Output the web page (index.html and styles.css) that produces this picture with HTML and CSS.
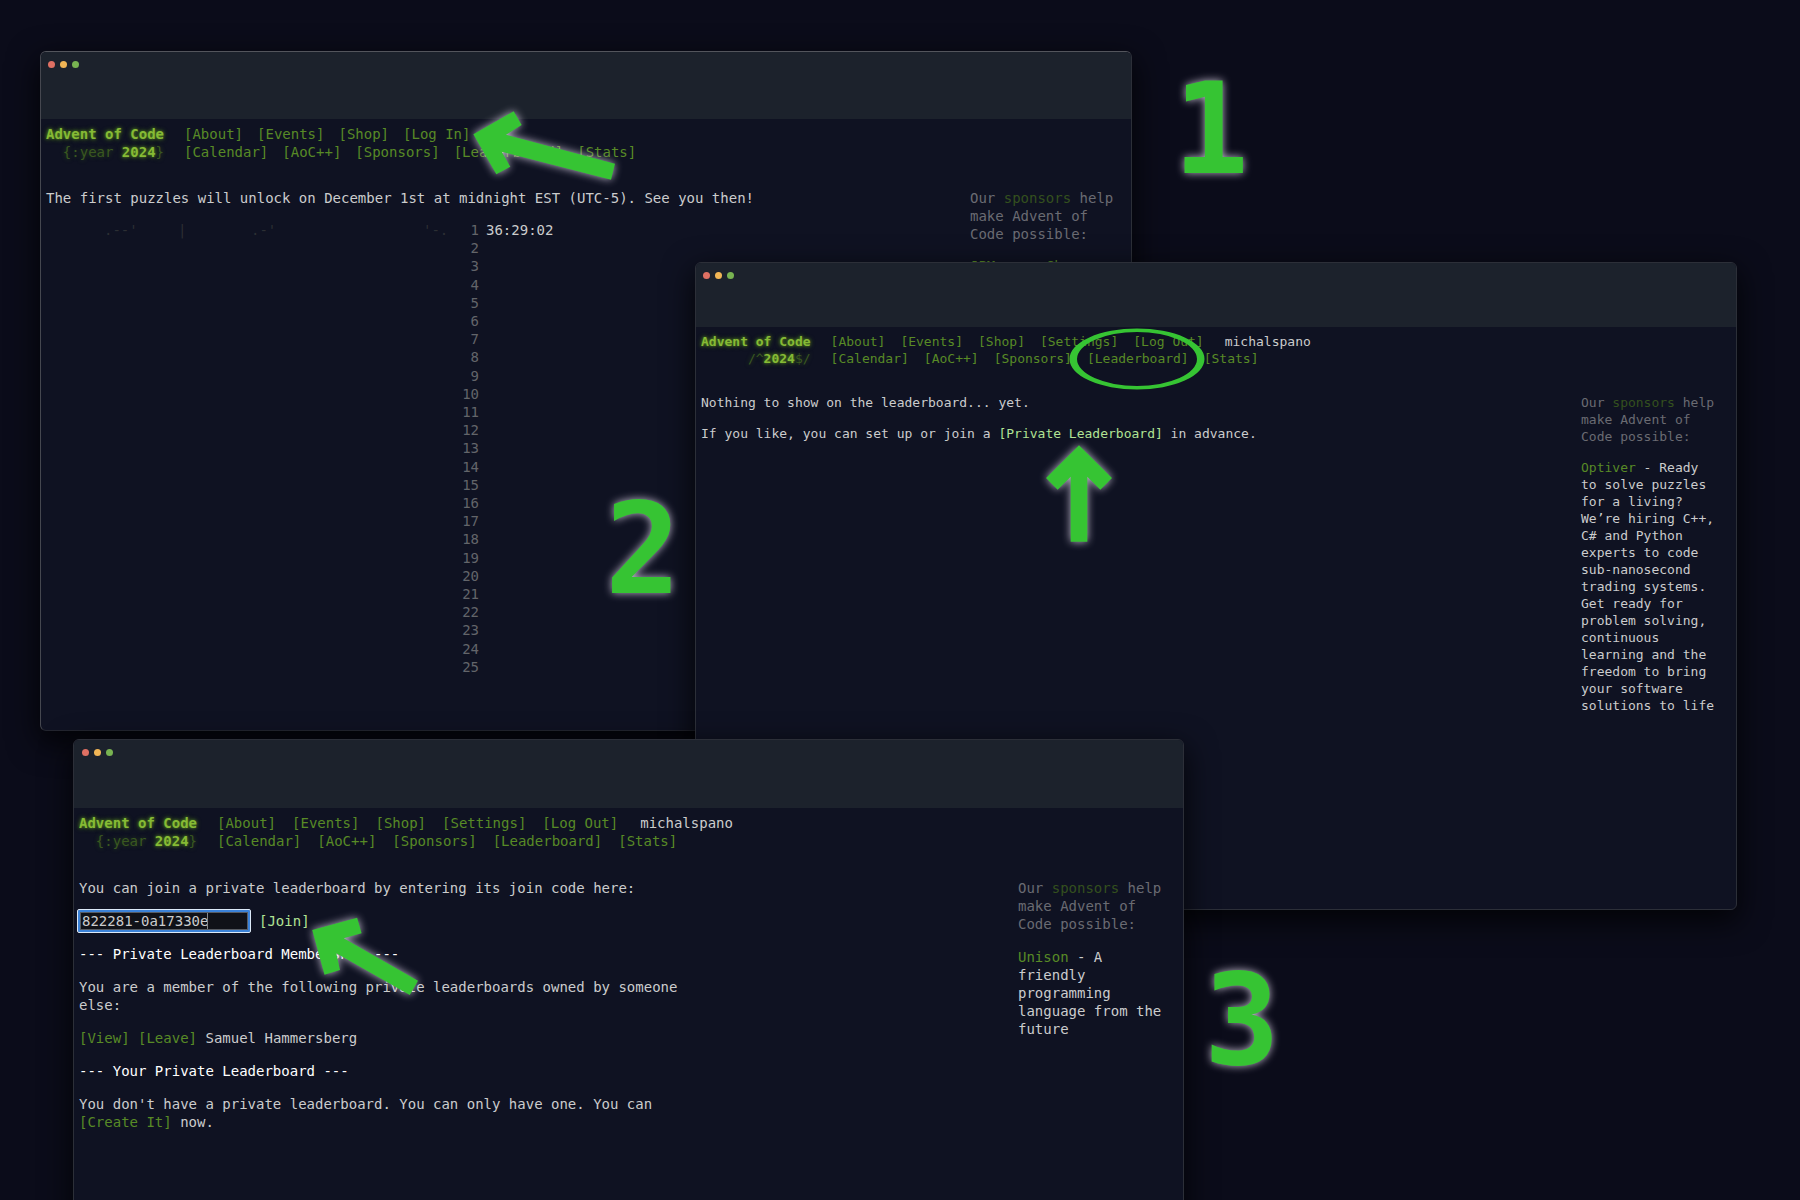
FILE: index.html
```html
<!DOCTYPE html>
<html lang="en">
<head>
<meta charset="utf-8">
<title>Joining a private leaderboard</title>
<link rel="stylesheet" href="styles.css">
</head>
<body>
<main class="desktop">

  <section class="window window-login">
    <div class="titlebar"><span class="dot red"></span><span class="dot yellow"></span><span class="dot green"></span></div>
    <div class="page">
      <header class="masthead">
        <div class="logo"><strong>Advent of Code</strong><span><i>{:year </i><strong>2024</strong><i>}</i></span></div>
        <nav>
          <div class="links"><a href="#">[About]</a><a href="#">[Events]</a><a href="#">[Shop]</a><a href="#">[Log In]</a></div>
          <div class="links"><a href="#">[Calendar]</a><a href="#">[AoC++]</a><a href="#">[Sponsors]</a><a href="#">[Leaderboard]</a><a href="#">[Stats]</a></div>
        </nav>
      </header>
      <div class="content">
        <article>
          <p>The first puzzles will unlock on December 1st at midnight EST (UTC-5). See you then!</p>
          <ol class="calendar">
            <li><span class="art"><span>.--'</span><span>|</span><span>.-'</span><span>'-.</span></span><span class="day">1</span><time>36:29:02</time></li>
            <li><span class="day">2</span></li>
            <li><span class="day">3</span></li>
            <li><span class="day">4</span></li>
            <li><span class="day">5</span></li>
            <li><span class="day">6</span></li>
            <li><span class="day">7</span></li>
            <li><span class="day">8</span></li>
            <li><span class="day">9</span></li>
            <li><span class="day">10</span></li>
            <li><span class="day">11</span></li>
            <li><span class="day">12</span></li>
            <li><span class="day">13</span></li>
            <li><span class="day">14</span></li>
            <li><span class="day">15</span></li>
            <li><span class="day">16</span></li>
            <li><span class="day">17</span></li>
            <li><span class="day">18</span></li>
            <li><span class="day">19</span></li>
            <li><span class="day">20</span></li>
            <li><span class="day">21</span></li>
            <li><span class="day">22</span></li>
            <li><span class="day">23</span></li>
            <li><span class="day">24</span></li>
            <li><span class="day">25</span></li>
          </ol>
        </article>
        <aside>
          <p class="intro">Our <a href="#">sponsors</a> help<br>make Advent of<br>Code possible:</p>
          <p><a href="#">JPMorgan Ch</a></p>
        </aside>
      </div>
    </div>
  </section>

  <section class="window window-board">
    <div class="titlebar"><span class="dot red"></span><span class="dot yellow"></span><span class="dot green"></span></div>
    <div class="page">
      <header class="masthead">
        <div class="logo"><strong>Advent of Code</strong><span><i>/^</i><strong>2024</strong><i>$/</i></span></div>
        <nav>
          <div class="links"><a href="#">[About]</a><a href="#">[Events]</a><a href="#">[Shop]</a><a href="#">[Settings]</a><a href="#">[Log Out]</a><span class="user">michalspano</span></div>
          <div class="links"><a href="#">[Calendar]</a><a href="#">[AoC++]</a><a href="#">[Sponsors]</a><a href="#">[Leaderboard]</a><a href="#">[Stats]</a></div>
        </nav>
      </header>
      <div class="content">
        <article>
          <p>Nothing to show on the leaderboard... yet.</p>
          <p>If you like, you can set up or join a <a class="lit" href="#">[Private Leaderboard]</a> in advance.</p>
        </article>
        <aside>
          <p class="intro">Our <a href="#">sponsors</a> help<br>make Advent of<br>Code possible:</p>
          <p><a href="#">Optiver</a> - Ready<br>to solve puzzles<br>for a living?<br>We’re hiring C++,<br>C# and Python<br>experts to code<br>sub-nanosecond<br>trading systems.<br>Get ready for<br>problem solving,<br>continuous<br>learning and the<br>freedom to bring<br>your software<br>solutions to life</p>
        </aside>
      </div>
    </div>
  </section>

  <section class="window window-join">
    <div class="titlebar"><span class="dot red"></span><span class="dot yellow"></span><span class="dot green"></span></div>
    <div class="page">
      <header class="masthead">
        <div class="logo"><strong>Advent of Code</strong><span><i>{:year </i><strong>2024</strong><i>}</i></span></div>
        <nav>
          <div class="links"><a href="#">[About]</a><a href="#">[Events]</a><a href="#">[Shop]</a><a href="#">[Settings]</a><a href="#">[Log Out]</a><span class="user">michalspano</span></div>
          <div class="links"><a href="#">[Calendar]</a><a href="#">[AoC++]</a><a href="#">[Sponsors]</a><a href="#">[Leaderboard]</a><a href="#">[Stats]</a></div>
        </nav>
      </header>
      <div class="content">
        <article>
          <p><label for="code">You can join a private leaderboard by entering its join code here:</label></p>
          <form class="join">
            <span class="field"><input id="code" type="text" value="822281-0a17330e"></span>
            <button type="button">[Join]</button>
          </form>
          <h2>--- Private Leaderboard Membership ---</h2>
          <p>You are a member of the following private leaderboards owned by someone<br>else:</p>
          <p><a href="#">[View]</a> <a href="#">[Leave]</a> Samuel Hammersberg</p>
          <h2>--- Your Private Leaderboard ---</h2>
          <p>You don't have a private leaderboard. You can only have one. You can<br><a href="#">[Create It]</a> now.</p>
        </article>
        <aside>
          <p class="intro">Our <a href="#">sponsors</a> help<br>make Advent of<br>Code possible:</p>
          <p><a href="#">Unison</a> - A<br>friendly<br>programming<br>language from the<br>future</p>
        </aside>
      </div>
    </div>
  </section>

  <span class="step step-1">1</span>
  <span class="step step-2">2</span>
  <span class="step step-3">3</span>

  <svg class="mark arrow-login" width="143" height="70" viewBox="0 0 429 210" aria-hidden="true"><path d="M1 70 122 1 146 42 99 71 426 158 414 206 86 122 112 167 70 190Z"/></svg>
  <svg class="mark arrow-board" width="66" height="97" viewBox="0 0 198 291" aria-hidden="true"><path d="M99 1 198 99 163 134 124 95V290H74V95L35 134 0 99Z"/></svg>
  <svg class="mark arrow-join" width="107" height="78" viewBox="0 0 107 78" aria-hidden="true"><path d="M.2 13 45.1.7 49.6 16.3 31.7 21.3 106 63.7 97.8 78 24.3 36.3 28 53 12.5 57.7Z"/></svg>
  <svg class="ring" width="136" height="62" viewBox="0 0 136 62" aria-hidden="true"><path fill-rule="evenodd" d="M.5 31a67.5 30.5 0 1 0 135 0a67.5 30.5 0 1 0-135 0ZM8 31a60 27 0 1 1 120 0a60 27 0 1 1-120 0Z"/></svg>
</main>
</body>
</html>
```
FILE: styles.css
```css
:root {
  --accent: #36c433;
  --link: #588a26;
  --text: #cbcccd;
}

* {
  box-sizing: border-box;
}

body {
  margin: 0;
  background: #0b0c1a;
  color: var(--text);
  font-family: "DejaVu Sans Mono", "Liberation Mono", monospace;
}

a {
  color: var(--link);
  text-decoration: none;
}

p,
h2,
ol {
  margin: 0;
}

.desktop {
  position: relative;
  height: 100vh;
  overflow: hidden;
}

/* Windows */

.window {
  position: absolute;
  overflow: hidden;
  border: 1px solid #2c2f38;
  border-radius: 6px;
  background: #0f1222;
  box-shadow: 0 10px 30px 2px rgba(0, 0, 0, 0.75);
  font-size: 14px;
  line-height: 18px;
}

.window-login {
  top: 51px;
  left: 40px;
  right: 668px;
  min-height: 680px;
  border-color: #53555c #2c2f38 #23252f #45474f;
}

.window-board {
  top: 262px;
  left: 695px;
  right: 63px;
  min-height: 648px;
  font-size: 13px;
  line-height: 17px;
}

.window-join {
  top: 739px;
  left: 73px;
  right: 616px;
  min-height: 500px;
}

.titlebar {
  display: flex;
  gap: 5px;
  height: 67px;
  padding: 9px 7px;
  background: #1c222c;
}

.window-board .titlebar {
  height: 64px;
}

.window-join .titlebar {
  height: 68px;
  padding-left: 8px;
}

.dot {
  width: 7px;
  height: 7px;
  border-radius: 50%;
}

.red { background: #df7063; }
.yellow { background: #f0b555; }
.green { background: #78b351; }

.page {
  padding: 6px 5px;
}

/* Masthead */

.masthead {
  display: flex;
  gap: 20px;
}

.logo {
  display: flex;
  flex-direction: column;
  align-items: flex-end;
  color: #86ba35;
  text-shadow: 0 0 3px #4d7a1e, 0 0 5px #4d7a1e;
}

.logo i {
  color: #3a5820;
  font-style: normal;
  text-shadow: 0 0 4px #2c461b;
  white-space: pre;
}

.links {
  display: flex;
  gap: 14px;
}

.window-board .links {
  gap: 15px;
}

.window-join .links {
  gap: 16px;
}

.user {
  color: var(--text);
  margin-left: 6px;
}

/* Content */

.content {
  display: flex;
  justify-content: space-between;
  padding-top: 28px;
}

.window-board .content {
  padding-top: 27px;
}

article,
aside {
  display: flex;
  flex-direction: column;
  gap: 14px;
}

.window-join .content {
  padding-top: 29px;
}

.window-join article,
.window-join aside {
  gap: 15px;
}

aside {
  width: 156px;
}

.window-board aside {
  width: 150px;
}

.window-join aside {
  width: 160px;
}

.intro {
  color: #6a6b72;
}

.intro a {
  color: #34501e;
}

.lit {
  color: #b1e394;
}

h2 {
  color: #fff;
  font-size: inherit;
  font-weight: normal;
}

.calendar {
  display: grid;
  grid-template-rows: repeat(25, 1fr);
  height: 455px;
  padding: 0;
  list-style: none;
}

.calendar li {
  display: grid;
  grid-template-columns: 409px 17px auto;
  column-gap: 7px;
}

.art {
  display: grid;
  grid-template-columns: 74px 73px 172px auto;
  padding-left: 58px;
  color: #2c2f34;
}

.day {
  grid-column: 2;
  color: #63656a;
  text-align: right;
}

/* Join form */

.join {
  display: flex;
  align-items: center;
  gap: 8px;
  margin: -3px 0 -3px -2px;
}

.field {
  position: relative;
  display: flex;
}

.field::after {
  content: "";
  position: absolute;
  top: 4px;
  left: 130px;
  width: 1px;
  height: 16px;
  background: #85878a;
}

.join input {
  width: 174px;
  height: 24px;
  padding: 0 4px;
  border: 1px solid #dce9f8;
  border-radius: 2px;
  background: #101218;
  box-shadow: inset 0 0 0 2px #3b82d8, inset 0 0 0 3px #575c63;
  color: var(--text);
  font: inherit;
}

.join button {
  padding: 0;
  border: 0;
  background: none;
  color: #b1e394;
  font: inherit;
}

/* Annotations */

.step {
  position: absolute;
  color: var(--accent);
  font-size: 126px;
  font-weight: bold;
  line-height: 93px;
  text-shadow: 0 0 8px rgba(235, 225, 245, 0.8);
}

.step-1 { top: 83px; left: 1173px; }
.step-2 { top: 503px; left: 605px; }
.step-3 { top: 974px; left: 1204px; }

.mark,
.ring {
  position: absolute;
  overflow: visible;
  fill: var(--accent);
}

.mark {
  filter: drop-shadow(0 0 4px rgba(235, 225, 245, 0.8));
}

.arrow-login { top: 111px; left: 473px; }
.arrow-board { top: 445px; left: 1046px; }
.arrow-join { top: 917px; left: 312px; }
.ring { top: 328px; left: 1069px; }
```
